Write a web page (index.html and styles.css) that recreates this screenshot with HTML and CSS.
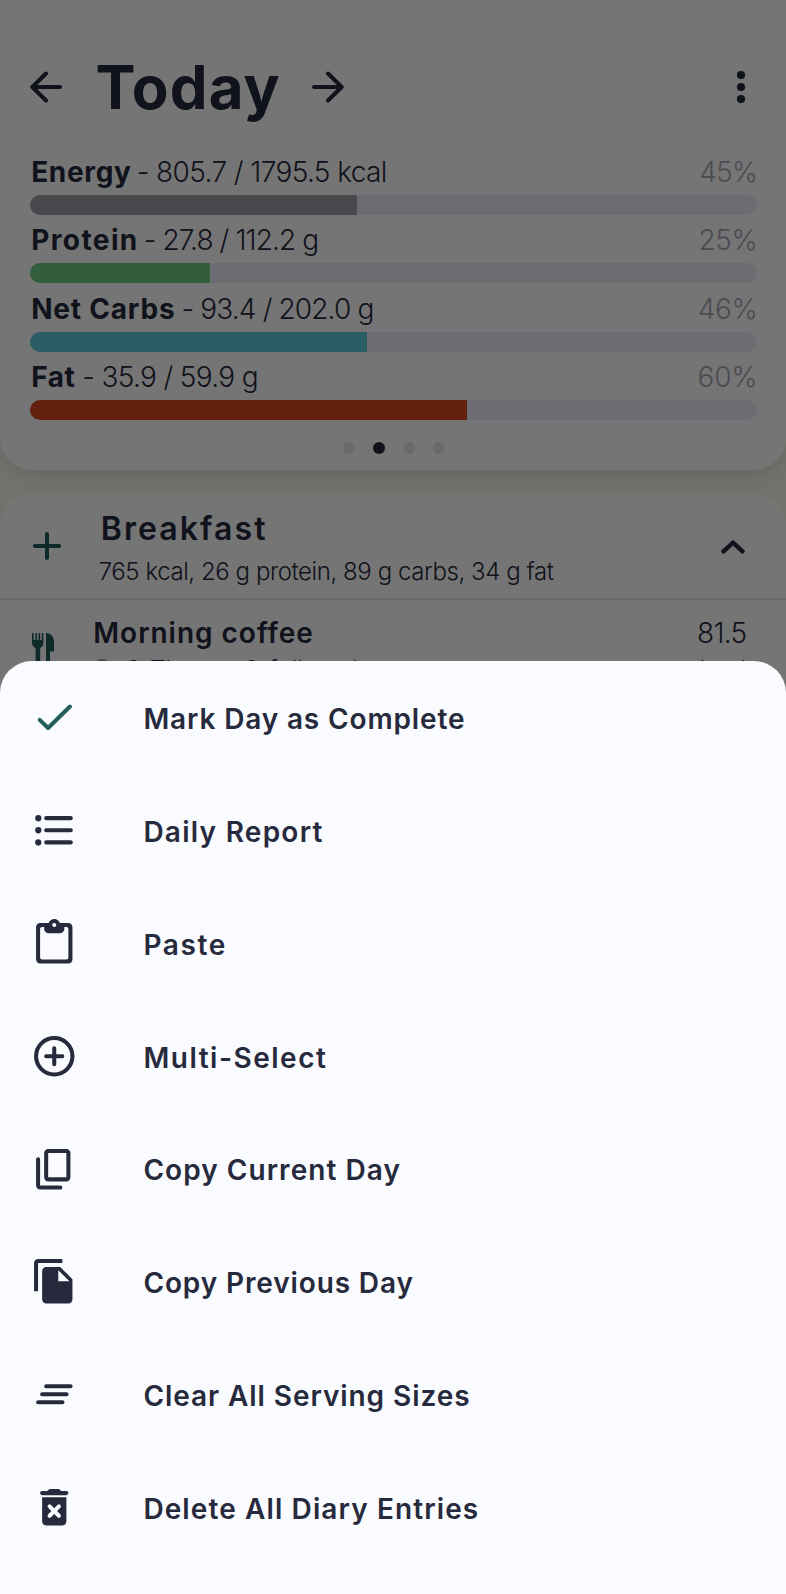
FILE: index.html
```html
<!DOCTYPE html>
<html lang="en">
<head>
<meta charset="utf-8">
<title>Today</title>
<link rel="stylesheet" href="styles.css">
</head>
<body>
<div class="phone">
  <main class="diary">
    <section class="summary">
      <header class="day-bar">
        <svg class="arrow" viewBox="0 0 32 32"><path d="M30 16H2.3M16 2.500 2.3 16 16 29.500"/></svg>
        <h1 class="day-title">Today</h1>
        <svg class="arrow" viewBox="0 0 32 32"><path d="M2 16h27.7M16 2.500l13.7 13.5L16 29.500"/></svg>
        <svg class="kebab" viewBox="0 0 10 34"><circle cx="5" cy="5" r="4.1"/><circle cx="5" cy="17" r="4.1"/><circle cx="5" cy="29.1" r="4.1"/></svg>
      </header>
      <div class="targets">
        <div class="target energy">
          <div class="target-text"><b>Energy</b><span class="amount">- 805.7 / 1795.5 kcal</span><span class="percent">45%</span></div>
          <div class="track"><div class="fill" style="width:44.9%"></div></div>
        </div>
        <div class="target protein">
          <div class="target-text"><b>Protein</b><span class="amount">- 27.8 / 112.2 g</span><span class="percent">25%</span></div>
          <div class="track"><div class="fill" style="width:24.75%"></div></div>
        </div>
        <div class="target carbs">
          <div class="target-text"><b>Net Carbs</b><span class="amount">- 93.4 / 202.0 g</span><span class="percent">46%</span></div>
          <div class="track"><div class="fill" style="width:46.3%"></div></div>
        </div>
        <div class="target fat">
          <div class="target-text"><b>Fat</b><span class="amount">- 35.9 / 59.9 g</span><span class="percent">60%</span></div>
          <div class="track"><div class="fill" style="width:60%"></div></div>
        </div>
      </div>
      <div class="pager"><i></i><i class="current"></i><i></i><i></i></div>
    </section>
    <section class="meal">
      <div class="meal-head">
        <svg class="plus" viewBox="0 0 30 30"><path d="M15 2.9v24.2M2.9 15h24.2"/></svg>
        <div class="meal-text">
          <h2>Breakfast</h2>
          <p>765 kcal, 26 g protein, 89 g carbs, 34 g fat</p>
        </div>
        <svg class="chevron" viewBox="0 0 24 14"><path d="M2.5 11.3 12 2.6l9.5 8.7"/></svg>
      </div>
      <div class="food">
        <svg class="cutlery" viewBox="0 0 22 40"><path d="M0 0h1.600v7h1.700V0h1.600v7h1.600V0h1.700v7h1.600V0h1.600v9.500c0 3-1.400 5-3.200 5.200V40H3.600V14.700C1.600 14.400 0 12.500 0 9.500zM14 0c5 .2 8 4 8 9v9.500h-4V40h-4z"/></svg>
        <div class="food-text">
          <h3>Morning coffee</h3>
          <p class="serving"><i class="bullet"></i><span class="qty">2</span><span class="unit">Tbsp</span><span class="of">0</span><span class="full">full</span><span class="last">d</span></p>
        </div>
        <div class="food-energy"><div class="value">81.5</div><div class="kcal">kcal</div></div>
      </div>
    </section>
  </main>
  <div class="scrim"></div>
  <nav class="sheet">
    <a class="item i1"><svg class="check" viewBox="0 0 24 24"><path d="M4.8 13.3 8.950 17.3 19.8 6.700"/></svg><span>Mark Day as Complete</span></a>
    <a class="item i2"><svg viewBox="0 0 24 24"><circle cx="4.100" cy="6" r="1.550"/><circle cx="4.100" cy="12" r="1.550"/><circle cx="4.100" cy="18" r="1.550"/><path d="M8 5h12.200a1 1 0 0 1 0 2H8a1 1 0 0 1 0-2zM8 11h12.200a1 1 0 0 1 0 2H8a1 1 0 0 1 0-2zM8 17h12.200a1 1 0 0 1 0 2H8a1 1 0 0 1 0-2z"/></svg><span>Daily Report</span></a>
    <a class="item i3"><svg viewBox="0 0 24 24"><path d="M19 2h-4.180C14.400.84 13.300 0 12 0S9.600.84 9.180 2H5c-1.100 0-2 .9-2 2v16c0 1.100.9 2 2 2h14c1.100 0 2-.9 2-2V4c0-1.100-.9-2-2-2zm-7 0c.55 0 1 .45 1 1s-.45 1-1 1-1-.45-1-1 .45-1 1-1zm6 18H6c-.55 0-1-.45-1-1V5c0-.55.45-1 1-1h1v1c0 1.100.9 2 2 2h6c1.100 0 2-.9 2-2V4h1c.55 0 1 .45 1 1v14c0 .55-.45 1-1 1z"/></svg><span>Paste</span></a>
    <a class="item i4"><svg class="line" viewBox="0 0 24 24"><circle cx="12" cy="12" r="9"/><path d="M12 8v8M8 12h8"/></svg><span>Multi-Select</span></a>
    <a class="item i5"><svg viewBox="0 0 24 24"><path d="M9 18q-.825 0-1.412-.587Q7 16.825 7 16V4q0-.825.588-1.413Q8.175 2 9 2h9q.825 0 1.413.587Q20 3.175 20 4v12q0 .825-.587 1.413Q18.825 18 18 18Zm0-2h9V4H9v12Zm-4 6q-.825 0-1.413-.587Q3 20.825 3 20V7q0-.425.288-.713Q3.575 6 4 6t.713.287Q5 6.575 5 7v13h10q.425 0 .713.288.287.287.287.712t-.287.712Q15.425 22 15 22Z"/></svg><span>Copy Current Day</span></a>
    <a class="item i6"><svg viewBox="0 0 24 24"><path d="M16 1H4c-1.100 0-2 .9-2 2v14h2V3h12V1zm-1 4H8c-1.100 0-2 .9-2 2v14c0 1.100.89 2 2 2h11c1.100 0 2-.9 2-2V11l-6-6zm-1 7V6.500l5.500 5.500H14z"/></svg><span>Copy Previous Day</span></a>
    <a class="item i7"><svg viewBox="0 0 24 24"><path d="M8 7h12.100a1 1 0 0 1 0 2H8a1 1 0 0 1 0-2zM6 11h12.100a1 1 0 0 1 0 2H6a1 1 0 0 1 0-2zM4 15h12.100a1 1 0 0 1 0 2H4a1 1 0 0 1 0-2z"/></svg><span>Clear All Serving Sizes</span></a>
    <a class="item i8"><svg viewBox="0 0 24 24"><path d="M6 19c0 1.100.9 2 2 2h8c1.100 0 2-.9 2-2V7H6zM18 4h-2.500l-.71-.71c-.18-.18-.44-.29-.7-.29H9.910c-.26 0-.52.11-.7.29L8.500 4H6c-.55 0-1 .45-1 1s.45 1 1 1h12c.55 0 1-.45 1-1s-.45-1-1-1z"/><path class="cross" d="m9.700 11.600 4.600 4.600m0-4.600-4.600 4.600"/></svg><span>Delete All Diary Entries</span></a>
  </nav>
</div>
</body>
</html>
```
FILE: styles.css
```css
* { box-sizing: border-box; }
body { margin: 0; font-family: Inter, "Liberation Sans", sans-serif; }
h1, h2, h3, p { margin: 0; }
svg { display: block; flex: none; }

.phone {
  position: relative;
  width: 786px;
  height: 1594px;
  overflow: hidden;
  background: #fcf8ec;
  color: #272a3d;
}
.diary { height: 700px; overflow: hidden; }

/* Daily summary card */
.summary {
  height: 470px;
  padding: 43.500px 28.700px 0 30.400px;
  background: #fff;
  border-radius: 0 0 32px 32px;
  box-shadow: 0 4px 18px rgba(0, 0, 0, .13);
}
.day-bar { display: flex; align-items: center; height: 87px; }
.arrow { width: 32px; height: 32px; }
.arrow path, .plus path, .chevron path {
  fill: none;
  stroke: #272a3d;
  stroke-width: 4;
  stroke-linecap: round;
  stroke-linejoin: round;
}
.day-title {
  width: 216.500px;
  margin-left: 33px;
  font-size: 60px;
  font-weight: 700;
  line-height: 87px;
  letter-spacing: 1.100px;
}
.kebab { width: 10px; height: 34px; margin-left: auto; margin-right: 11.300px; fill: #272a3d; }

.targets { display: flex; flex-direction: column; gap: 10.200px; padding-top: 26.800px; }
.target-text {
  display: flex;
  height: 38px;
  padding-left: .8px;
  font-size: 28px;
  line-height: 31px;
  white-space: pre;
}
.target-text b { font-weight: 650; }
.amount { font-weight: 300; }
.percent { margin-left: auto; font-weight: 300; color: #a4a5b3; }
.track { height: 20px; border-radius: 10px; background: #ebedf9; overflow: hidden; }
.fill { height: 100%; }
.energy .fill { background: #9d9fa7; }
.protein .fill { background: #6dcc80; }
.carbs .fill { background: #5bc8d7; }
.fat .fill { background: #d94621; }

.energy b { letter-spacing: .66px; }
.energy .amount { margin-left: 5.200px; letter-spacing: -.6px; }
.energy .percent { letter-spacing: -.76px; }
.protein b { letter-spacing: 1.400px; }
.protein .amount { margin-left: 5px; letter-spacing: -.9px; }
.protein .percent { letter-spacing: -.4px; }
.carbs b { letter-spacing: .8px; }
.carbs .amount { margin-left: 6.100px; letter-spacing: -.86px; }
.carbs .percent { letter-spacing: -.4px; }
.fat b { letter-spacing: .54px; }
.fat .amount { margin-left: 7px; letter-spacing: -.66px; }
.fat .percent { letter-spacing: -.2px; }

.pager { display: flex; justify-content: center; gap: 18.200px; padding: 22px 0 0 0; }
.pager i { width: 12px; height: 12px; border-radius: 50%; background: #e7e7ec; }
.pager .current { background: #272a3d; }

/* Meal list */
.meal { margin-top: 24px; background: #fff; border-radius: 32px 32px 0 0; }
.meal-head {
  display: flex;
  align-items: center;
  height: 106px;
  padding: 0 41px 0 31.500px;
  border-bottom: 2px solid #e3e3e3;
}
.plus { width: 30px; height: 30px; }
.plus path { stroke: #1f5c5a; }
.meal-text { flex: 1; padding: 16px 0 0 37.200px; height: 106px; white-space: nowrap; }
.meal-text h2 { padding-left: 2px; font-size: 32px; font-weight: 600; line-height: 40px; letter-spacing: 2.100px; }
.meal-text p { margin-top: 7px; font-size: 24px; font-weight: 300; line-height: 32px; letter-spacing: -.43px; }
.chevron { width: 24px; height: 14px; margin-top: 2px; }
.chevron path { stroke-width: 4.400; }

.food { display: flex; padding: 15.500px 39.500px 0 32.300px; height: 100px; }
.cutlery { width: 22px; height: 40px; margin-top: 17px; fill: #1f5c5a; }
.food-text { flex: 1; padding-left: 39px; }
.food h3 { font-size: 28px; font-weight: 600; line-height: 34px; letter-spacing: .98px; }
.serving { display: flex; align-items: center; height: 39px; font-size: 24px; font-weight: 300; line-height: 39px; }
.bullet { width: 20px; height: 20px; margin-left: -1px; margin-right: 14px; border-radius: 50%; background: #999; }
.qty { width: 24px; }
.unit { width: 94px; }
.of { width: 25px; }
.full { width: 74px; }
.food-energy { text-align: right; font-size: 28px; line-height: 34px; }
.value { font-weight: 350; letter-spacing: -.71px; }
.kcal { font-size: 24px; font-weight: 300; line-height: 39px; letter-spacing: .6px; }

/* Action sheet */
.scrim { position: absolute; inset: 0; background: rgba(0, 0, 0, .54); }
.sheet {
  position: absolute;
  left: 0;
  right: 0;
  bottom: 0;
  height: 933px;
  background: #fafbff;
  border-radius: 32px 32px 0 0;
}
.item { display: flex; align-items: center; height: 112.870px; padding-left: 30.200px; }
.item svg { width: 48.500px; height: 48.500px; fill: #272a3d; }
.item .line, .item .check { fill: none; stroke: #272a3d; stroke-width: 2; stroke-linecap: round; }
.item .check { stroke: #255f5d; stroke-linejoin: round; }
.cross { stroke: #fafbff; stroke-width: 2; stroke-linecap: round; }
.item span { padding: 3px 0 0 64.700px; font-size: 28px; font-weight: 580; line-height: 34px; white-space: nowrap; }
.i1 span { letter-spacing: .86px; }
.i2 span { letter-spacing: 1.260px; }
.i3 span { letter-spacing: 1.650px; }
.i4 span { letter-spacing: 1.520px; }
.i5 span { letter-spacing: 1.050px; }
.i6 span { letter-spacing: .88px; }
.i7 span { letter-spacing: .93px; }
.i8 span { letter-spacing: 1.110px; }
```
